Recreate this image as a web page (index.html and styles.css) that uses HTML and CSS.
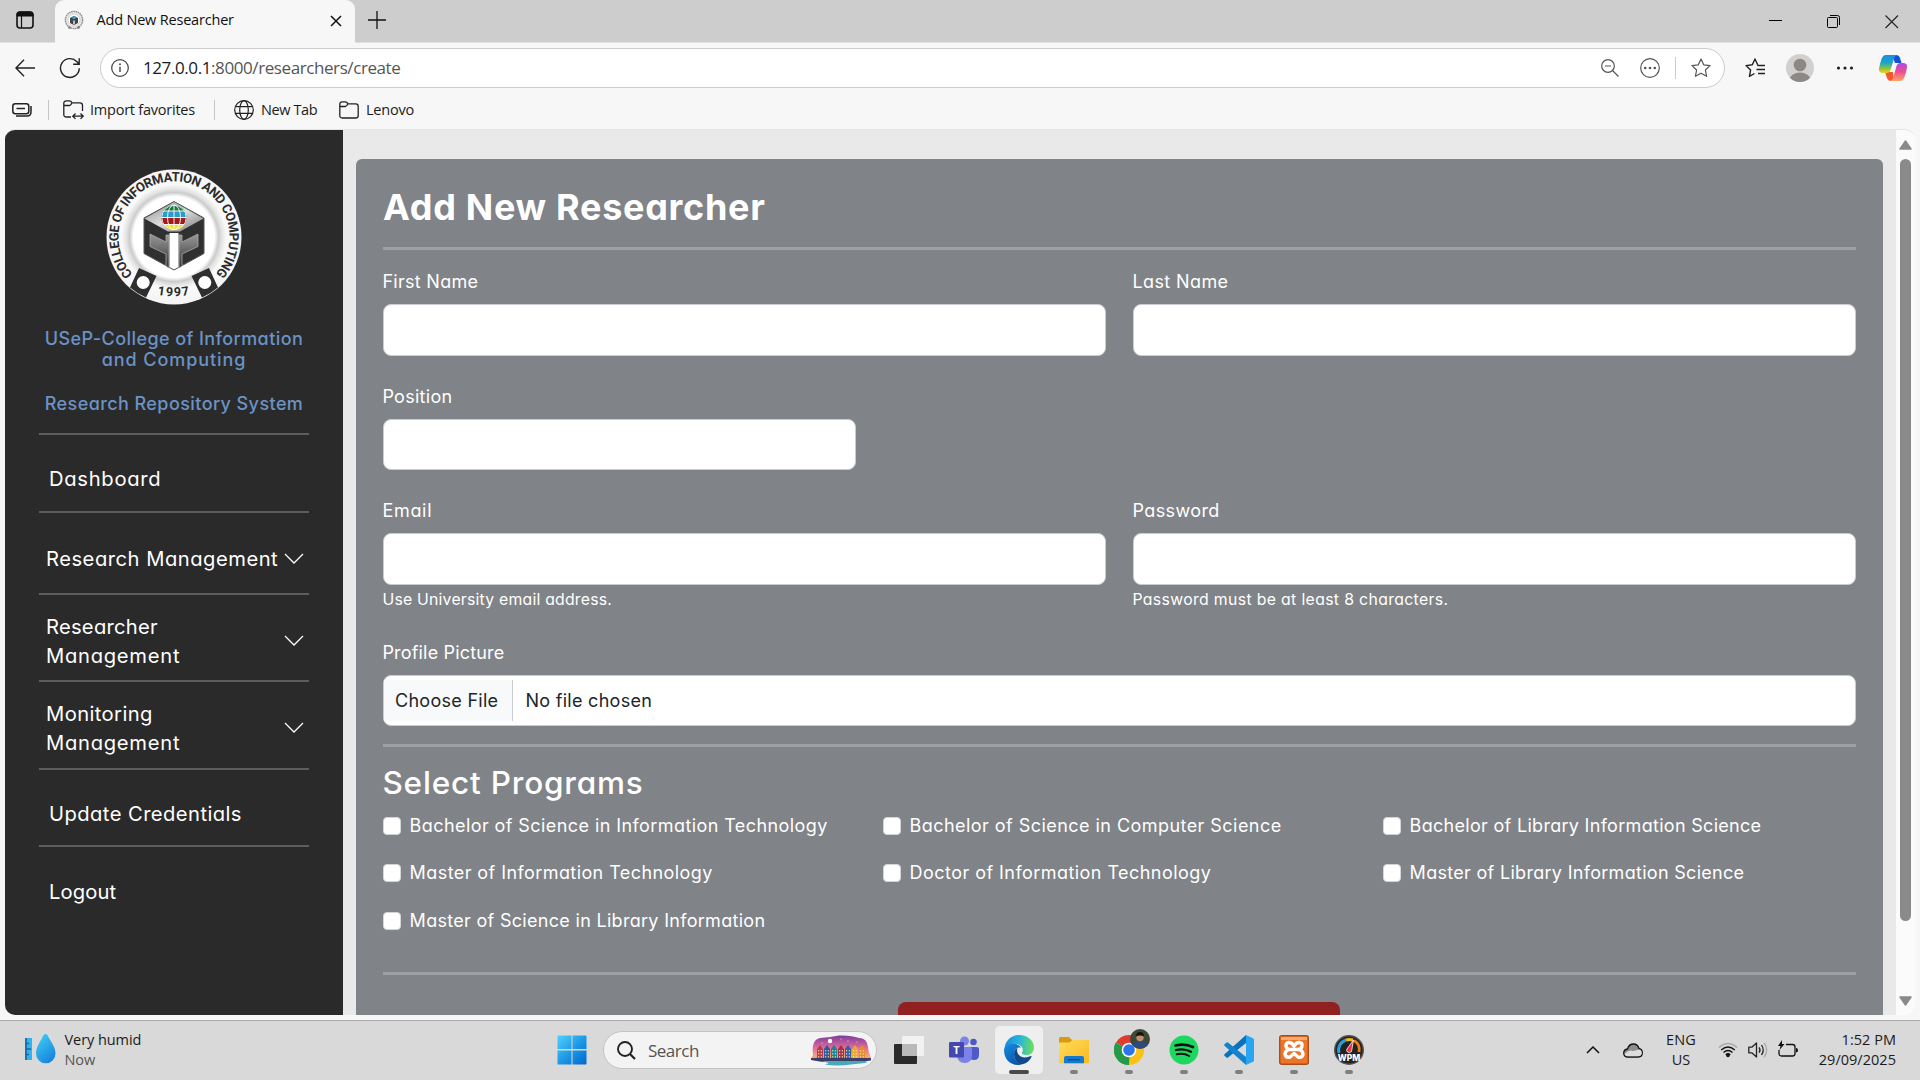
FILE: index.html
```
<!DOCTYPE html>
<html lang="en">
<head>
<meta charset="utf-8">
<title>Add New Researcher</title>
<link rel="stylesheet" href="styles.css">
</head>
<body>
<div class="desktop">

<header class="tabstrip">
  <svg class="tab-actions" width="18" height="18" viewBox="0 0 18 18"><rect x="1" y="1" width="16" height="16" rx="3" fill="none" stroke="#111" stroke-width="1.6"/><path d="M1 5V3.5Q1 1 3.5 1h11Q17 1 17 3.5V5z" fill="#111" stroke="#111"/><path d="M5.5 5v12" stroke="#111" stroke-width="1.2"/></svg>
  <div class="tab">
    <svg class="favicon" width="20" height="20" viewBox="0 0 20 20"><circle cx="10" cy="10" r="8.6" fill="#e9e9e9" stroke="#8c8c8c" stroke-width="1.4" stroke-dasharray="1.6 .6"/><circle cx="10" cy="10" r="6" fill="#fff" stroke="#bbb" stroke-width=".6"/><path d="M6 8l4-2 4 2v5l-4 2.200-4-2.200z" fill="#444"/><circle cx="10" cy="7.500" r="1.800" fill="#3aa0c8"/><path d="M9.300 10.500h1.400v4h-1.400z" fill="#eee"/><circle cx="5.500" cy="17.500" r="1.300" fill="#777"/><circle cx="14.500" cy="17.500" r="1.300" fill="#777"/></svg>
    <span class="tab-title">Add New Researcher</span>
    <svg class="tab-close" width="12" height="12" viewBox="0 0 12 12"><path d="M1 1l10 10M11 1L1 11" stroke="#111" stroke-width="1.5"/></svg>
  </div>
  <svg class="tab-new" width="18" height="18" viewBox="0 0 18 18"><path d="M9 0v18M0 9h18" stroke="#111" stroke-width="1.3"/></svg>
  <div class="window-buttons">
    <svg width="14" height="14" viewBox="0 0 14 14"><path d="M0 5.500h13" stroke="#000"/></svg>
    <svg width="14" height="14" viewBox="0 0 14 14"><rect x=".5" y="2.500" width="10" height="10" rx="1" fill="none" stroke="#000"/><path d="M3 .5h7.500q2 0 2 2V10" fill="none" stroke="#000"/></svg>
    <svg width="14" height="14" viewBox="0 0 14 14"><path d="M.5.5l12.500 12.500M13 .5L.5 13" stroke="#222" stroke-width="1.1"/></svg>
  </div>
</header>

<div class="toolbar">
  <svg class="nav-back" width="20" height="18" viewBox="0 0 20 18"><path d="M9 .8L1 9l8 8.200M1 9h19" fill="none" stroke="#222" stroke-width="1.4"/></svg>
  <svg class="nav-refresh" width="22" height="22" viewBox="0 0 22 22"><path d="M20.300 11.200a9.400 9.400 0 1 1-2.600-6.700L20 7M20.200 1.200v6h-6" fill="none" stroke="#222" stroke-width="1.4"/></svg>
  <div class="address">
    <svg width="18" height="18" viewBox="0 0 18 18"><circle cx="9" cy="9" r="8.300" fill="none" stroke="#444" stroke-width="1.200"/><path d="M9 7.800v5.200" stroke="#444" stroke-width="1.400"/><circle cx="9" cy="5.300" r=".95" fill="#444"/></svg>
    <span class="url"><b>127.0.0.1</b>:8000/researchers/create</span>
    <svg class="addr-zoom" width="18" height="18" viewBox="0 0 18 18"><circle cx="7" cy="7" r="6.300" fill="none" stroke="#555" stroke-width="1.200"/><path d="M4 7h6M11.500 11.500l6 6" stroke="#555" stroke-width="1.200"/></svg>
    <svg class="addr-more" width="20" height="20" viewBox="0 0 20 20"><circle cx="10" cy="10" r="9.300" fill="none" stroke="#555" stroke-width="1.200"/><g fill="#555"><circle cx="5.200" cy="10" r="1.300"/><circle cx="10" cy="10" r="1.300"/><circle cx="14.800" cy="10" r="1.300"/></g></svg>
    <i class="addr-sep"></i>
    <svg class="addr-star" width="20" height="20" viewBox="0 0 20 20"><path d="M10 1l2.700 5.800 6.300.8-4.600 4.400 1.200 6.300L10 15.200l-5.600 3.100 1.200-6.300L1 7.600l6.300-.8z" fill="none" stroke="#555" stroke-width="1.200" stroke-linejoin="round"/></svg>
  </div>
  <svg class="fav-list" width="20" height="20" viewBox="0 0 20 20"><path d="M13 7.500L12.500 6.500 10 1 7.300 6.800 1 7.600 5.600 12l-1.200 6.300L9.500 15.500M12.500 7.500H20M11.500 11.500H20M13 15.500H20" fill="none" stroke="#222" stroke-width="1.400" stroke-linejoin="round"/></svg>
  <svg class="avatar" width="28" height="28" viewBox="0 0 28 28"><defs><clipPath id="av"><circle cx="14" cy="14" r="14"/></clipPath></defs><g clip-path="url(#av)"><rect width="28" height="28" fill="#d2d0ce"/><circle cx="14" cy="11" r="6.300" fill="#8b8885"/><ellipse cx="14" cy="25" rx="10" ry="6.500" fill="#8b8885"/></g></svg>
  <svg class="menu-dots" width="18" height="4" viewBox="0 0 18 4"><g fill="#222"><circle cx="2.500" cy="2" r="1.600"/><circle cx="9" cy="2" r="1.600"/><circle cx="15.500" cy="2" r="1.600"/></g></svg>
  <svg class="copilot" width="28" height="26" viewBox="0 0 28 26"><defs><linearGradient id="c1" x1="0" y1="0" x2="0" y2="1"><stop offset="0" stop-color="#1b8be8"/><stop offset=".45" stop-color="#1ea6c4"/><stop offset=".75" stop-color="#8fc43c"/><stop offset="1" stop-color="#f3d11c"/></linearGradient><linearGradient id="c2" x1="0" y1="0" x2="0" y2="1"><stop offset="0" stop-color="#b04be8"/><stop offset=".5" stop-color="#ee4f8c"/><stop offset="1" stop-color="#ffa665"/></linearGradient></defs><path d="M13 0h4q3 0 4 3l1.500 5H16z" fill="#1750d4"/><path d="M6 17h8l1 9h-3q-3 0-4-3z" fill="#f4582c"/><path d="M7 0h11q-2 .5-2.800 3L11.500 15q-1 3-4 3H4q-4.500 0-4-4.500Q.5 10 2.500 4 4 0 7 0z" fill="url(#c1)"/><path d="M21 26H11q2.500-.8 3.200-3l3.300-12q1-3 4-3H24q4.500 0 4 4.500-.5 3.500-2.500 9.500-1.500 4-4.500 4z" fill="url(#c2)"/></svg>
</div>

<nav class="favorites">
  <svg class="fav-pin" width="20" height="14" viewBox="0 0 20 14"><rect x=".8" y=".8" width="16" height="10" rx="2.500" fill="none" stroke="#222" stroke-width="1.500"/><path d="M4.500 5.500h8.500" stroke="#222" stroke-width="1.500"/><path d="M19 3v6q0 4-4 4H4" fill="none" stroke="#222" stroke-width="1.500"/></svg>
  <i class="fav-sep"></i>
  <svg class="fav-import" width="21" height="20" viewBox="0 0 21 20"><path d="M8 17H3.500Q.8 17 .8 14.500V3.300Q.8.8 3.500.8h3q1.500 0 2.500 2h8q2.500 0 2.500 2.500V11M.8 5.500h6q1 0 2-2.500M10.500 16.200h9M12.500 13.500l-2.700 2.700 2.700 2.700M17.500 13.500l2.700 2.700-2.700 2.700" fill="none" stroke="#222" stroke-width="1.300"/></svg>
  <span class="t-import">Import favorites</span>
  <i class="fav-sep sep2"></i>
  <svg class="fav-globe" width="20" height="20" viewBox="0 0 20 20"><g fill="none" stroke="#222" stroke-width="1.200"><circle cx="10" cy="10" r="9.300"/><ellipse cx="10" cy="10" rx="4.300" ry="9.300"/><path d="M1.500 6.700h17M1.500 13.300h17"/></g></svg>
  <span class="t-newtab">New Tab</span>
  <svg class="fav-folder" width="20" height="18" viewBox="0 0 20 18"><path d="M3.300.8h3q1.500 0 2.700 2h7.700q2.500 0 2.500 2.500v9.200q0 2.500-2.500 2.500H3.300q-2.500 0-2.500-2.500V3.300q0-2.500 2.500-2.500zM.8 5.500h5.500q1.300 0 2.700-2.700" fill="none" stroke="#222" stroke-width="1.300"/></svg>
  <span class="t-lenovo">Lenovo</span>
</nav>

<div class="viewport">
  <aside class="sidebar">
    <svg class="seal" width="136" height="136" viewBox="0 0 136 136">
      <defs>
        <path id="arc" d="M26.800 105.100A55.500 55.500 0 1 1 109.200 105.100"/>
        <path id="yr" d="M44 124Q68 130.500 92 124"/>
        <radialGradient id="ring"><stop offset=".6" stop-color="#fff"/><stop offset=".66" stop-color="#ccc"/><stop offset=".71" stop-color="#e4e4e4"/><stop offset=".78" stop-color="#fafafa"/><stop offset="1" stop-color="#f4f4f4"/></radialGradient>
        <linearGradient id="top" x1="0" y1="0" x2="1" y2="1"><stop offset="0" stop-color="#888"/><stop offset=".5" stop-color="#ddd"/><stop offset="1" stop-color="#777"/></linearGradient>
        <linearGradient id="bar" x1="0" y1="0" x2="0" y2="1"><stop offset="0" stop-color="#999"/><stop offset="1" stop-color="#333"/></linearGradient>
        <clipPath id="gl"><circle cx="68" cy="48.500" r="12.500"/></clipPath>
      </defs>
      <circle cx="68" cy="68" r="67.500" fill="url(#ring)"/>
      <path d="M33 99l17.500 8-10.500 21.500q-9-4-16-10z" fill="#2e2e2e"/>
      <path d="M103 99l-17.500 8L96 128.500q9-4 16-10z" fill="#2e2e2e"/>
      <circle cx="37.200" cy="113.500" r="6.500" fill="#fff"/><circle cx="98.800" cy="113.500" r="6.500" fill="#fff"/>
      <path d="M68 32.500l30 16.500v35.500L68 101 38 84.500V49z" fill="#303030" stroke="#555" stroke-width="1"/>
      <path d="M68 33l29.500 16.500L74 62.500h-12L38.500 49.500z" fill="url(#top)"/>
      <path d="M63 66v33L60 97V85L44 77.500V65l16 8V66z" fill="url(#bar)" stroke="#aaa" stroke-width=".8"/>
      <path d="M73 66v33l3-2V85l16-7.500V65l-16 8V66z" fill="url(#bar)" stroke="#aaa" stroke-width=".8"/>
      <path d="M63.500 64h9v34L68 100.500 63.500 98z" fill="#fff"/>
      <g clip-path="url(#gl)"><rect x="55" y="35" width="26" height="7" fill="#1d7a45"/><rect x="55" y="42" width="26" height="6.500" fill="#2a9ccb"/><rect x="55" y="48.500" width="26" height="7" fill="#a01c1c"/><rect x="55" y="55.500" width="26" height="7" fill="#f4e02c"/><g fill="none" stroke="#fff" stroke-width=".9"><path d="M68 36v25M55 42h26M55 48.500h26M55 55.500h26"/><ellipse cx="68" cy="48.500" rx="6.500" ry="12.500"/><circle cx="68" cy="48.500" r="12.300"/></g></g>
      <text class="seal-text"><textPath href="#arc" textLength="255" lengthAdjust="spacing">COLLEGE OF INFORMATION AND COMPUTING</textPath></text>
      <text class="seal-year"><textPath href="#yr" startOffset="50%" text-anchor="middle">1997</textPath></text>
    </svg>
    <div class="brand"><span class="brand-a">USeP-College of Information</span><span class="brand-b">and Computing</span></div>
    <div class="brand brand-sys"><span class="brand-a">Research Repository System</span></div>
    <ul class="menu">
      <li class="item link dash"><span>Dashboard</span></li>
      <li class="item group rm"><span>Research Management</span><svg class="chev" width="20" height="12" viewBox="0 0 20 12"><path d="M1 1l9 9 9-9" fill="none" stroke="#fff" stroke-width="1.300"/></svg></li>
      <li class="item group rr"><span>Researcher<br><em>Management</em></span><svg class="chev" width="20" height="12" viewBox="0 0 20 12"><path d="M1 1l9 9 9-9" fill="none" stroke="#fff" stroke-width="1.300"/></svg></li>
      <li class="item group mm"><span>Monitoring<br><em>Management</em></span><svg class="chev" width="20" height="12" viewBox="0 0 20 12"><path d="M1 1l9 9 9-9" fill="none" stroke="#fff" stroke-width="1.300"/></svg></li>
      <li class="item link uc"><span>Update Credentials</span></li>
      <li class="item link lo"><span>Logout</span></li>
    </ul>
  </aside>

  <main class="card">
    <h1>Add New Researcher</h1>
    <div class="rule"></div>
    <div class="cols">
      <div><label class="l1">First Name</label><div class="input"></div></div>
      <div><label class="l1 wide">Last Name</label><div class="input"></div></div>
    </div>
    <div class="position"><label class="l2">Position</label><div class="input short"></div></div>
    <div class="cols">
      <div><label class="l3 wider">Email</label><div class="input"></div><p class="hint">Use University email address.</p></div>
      <div><label class="l3 wide">Password</label><div class="input"></div><p class="hint hint-b">Password must be at least 8 characters.</p></div>
    </div>
    <label class="l4">Profile Picture</label>
    <div class="input file"><span class="choose">Choose File</span><span class="nofile">No file chosen</span></div>
    <div class="rule rule-file"></div>
    <h2>Select Programs</h2>
    <div class="programs">
      <div class="check"><i></i><span class="p42">Bachelor of Science in Information Technology</span></div>
      <div class="check"><i></i><span class="p47">Bachelor of Science in Computer Science</span></div>
      <div class="check"><i></i><span class="p32">Bachelor of Library Information Science</span></div>
      <div class="check"><i></i><span class="p42">Master of Information Technology</span></div>
      <div class="check"><i></i><span class="p47">Doctor of Information Technology</span></div>
      <div class="check"><i></i><span class="p32">Master of Library Information Science</span></div>
      <div class="check"><i></i><span class="p32">Master of Science in Library Information</span></div>
    </div>
    <div class="rule"></div>
    <div class="submit"></div>
  </main>

  <div class="scrollbar">
    <svg width="13" height="10" viewBox="0 0 13 10"><path d="M6.500 1L12 9H1z" fill="#8a8a8a" stroke="#8a8a8a" stroke-width="1.500" stroke-linejoin="round"/></svg>
    <div class="thumb"></div>
    <svg width="13" height="10" viewBox="0 0 13 10"><path d="M6.500 9L12 1H1z" fill="#8a8a8a" stroke="#8a8a8a" stroke-width="1.500" stroke-linejoin="round"/></svg>
  </div>
</div>

<footer class="taskbar">
  <svg class="weather" width="32" height="32" viewBox="0 0 32 32"><defs><linearGradient id="dr" x1="0" y1="0" x2=".6" y2="1"><stop offset="0" stop-color="#43d3f5"/><stop offset="1" stop-color="#1886dd"/></linearGradient></defs><rect x="0" y="5" width="7" height="22" fill="#2fb4ee"/><path d="M1 5v22M1 10.500h3M1 16h5M1 21.500h3" stroke="#1565a8" stroke-width="1.600"/><path d="M20.500 1c1.500 0 2 1 3 3 2.500 5 7 10 7 16.500a9.700 9.700 0 0 1-19.500 0C11 14 15 9 17.500 4c1-2 1.500-3 3-3z" fill="url(#dr)"/></svg>
  <div class="weather-text"><span>Very humid</span><span class="dim">Now</span></div>

  <svg class="start" width="30" height="30" viewBox="0 0 30 30"><defs><linearGradient id="w" x1="0" y1="0" x2="1" y2="1"><stop offset="0" stop-color="#4fd2ff"/><stop offset=".5" stop-color="#1f9ae6"/><stop offset="1" stop-color="#0067cf"/></linearGradient></defs><path d="M1 .5h13.500V14H.5V1zM15.500.5H28.500L29.500 1v13h-14zM.5 15.500h14v14H1l-.5-.5zM15.500 15.500h14V29l-.5.500H15.500z" fill="url(#w)"/></svg>
  <div class="search">
    <svg width="19" height="19" viewBox="0 0 19 19"><circle cx="8" cy="8" r="7" fill="none" stroke="#222" stroke-width="1.900"/><path d="M13 13l5 5" stroke="#222" stroke-width="2.200"/></svg>
    <span>Search</span>
    <svg class="canal" width="60" height="31" viewBox="0 0 60 31"><defs><linearGradient id="sky" x1="0" y1="0" x2="0" y2="1"><stop offset="0" stop-color="#7d3c9c"/><stop offset=".45" stop-color="#d9699c"/><stop offset=".8" stop-color="#f5a07c"/></linearGradient></defs><path d="M2 20Q0 5 9 3 20 2 28 .5 40 0 48 3q8 0 9 9 0 5 3 11-3 3-10 2l-38 1Q4 27 0 24z" fill="url(#sky)"/><circle cx="19" cy="6" r="2.200" fill="#fff"/><g fill="#fff"><circle cx="30" cy="4" r=".5"/><circle cx="37" cy="6" r=".6"/><circle cx="46" cy="7" r=".5"/><circle cx="11" cy="8" r=".5"/></g><g><path d="M6 25V14l3-4 3 4v11z" fill="#b43a4c"/><path d="M13 25V14l3-4 3 4v11z" fill="#285a9c"/><path d="M20 25V14l3-4 3 4v11z" fill="#1c8393"/><path d="M27 25V14l3-4 3 4v11z" fill="#a33146"/><path d="M34 25V14l3-4 3 4v11z" fill="#315ca6"/><path d="M41 25V14l3-4 3 4v11z" fill="#f0a62d"/><path d="M48 25V14l3-4 3 4v11z" fill="#e58d28"/></g><path d="M7.700 15v8M10.300 15v8M14.700 15v8M17.300 15v8M21.700 15v8M24.300 15v8M28.700 15v8M31.300 15v8M35.700 15v8M38.300 15v8M42.700 15v8M45.300 15v8M49.700 15v8M52.300 15v8" stroke="#ffe6b0" stroke-width=".9" stroke-dasharray="1.500 1.500"/><path d="M0 23h60v2.500L44 27.500 12 27 0 25z" fill="#3a3e6b"/><path d="M10 26h44q4 1 0 2l-14 1.500q-14 2-26 0l4-1.500z" fill="#4aa8b8"/></svg>
  </div>
  <div class="apps">
    <div class="app"><svg width="30" height="30" viewBox="0 0 30 30"><rect x="0" y="9" width="23" height="20" rx="1" fill="#2a2a2a"/><rect x="8" y="1" width="22" height="20" rx="1" fill="#f6f6f6" opacity=".85"/><rect x="8" y="9" width="15" height="12" fill="#b9b9b9"/></svg></div>
    <div class="app"><svg width="30" height="30" viewBox="0 0 30 30"><circle cx="15.500" cy="6" r="4.500" fill="#7b83eb"/><circle cx="24.500" cy="7" r="3.300" fill="#5059c9"/><path d="M19 12h9q2 0 2 2v6q0 5-5 5-4 0-6-3z" fill="#5059c9"/><path d="M9 12h12q2 0 2 2v6q0 8-7.500 8-6.500 0-7.500-7z" fill="#7b83eb"/><rect x="0" y="7" width="15" height="15.500" rx="1.300" fill="#4349b0"/><text x="7.500" y="18.800" class="teams-t">T</text></svg></div>
    <div class="app active"><svg width="30" height="30" viewBox="0 0 30 30"><defs><linearGradient id="e1" x1="0" y1=".3" x2="1" y2=".4"><stop offset="0" stop-color="#2188d8"/><stop offset=".5" stop-color="#26b5dc"/><stop offset="1" stop-color="#6be05a"/></linearGradient><linearGradient id="e2" x1="0" y1="0" x2=".5" y2="1"><stop offset="0" stop-color="#138fe0"/><stop offset="1" stop-color="#0c59b0"/></linearGradient></defs><path d="M.5 13C1.500 5 8 0 15 0c9 0 15 6 15 12.500 0 5-3.500 7.500-7.500 7.500-4 0-5-1.500-4.500-2.500 1.500-1.500 1.500-6-3.500-8C9 7.500 2 9.500.5 13z" fill="url(#e1)"/><path d="M0 15C.5 10 5 8 9.500 8.500c4 .4 6.500 2 7.500 4.500-3-1.500-7 1-7 6 0 6 4 9 7 10.500-1 .5-2 .5-3 .5C5.500 30 0 23.500 0 15z" fill="url(#e2)"/><path d="M10 19c0-3.500 1.800-5.500 3.500-6-1.800 4.500 2 9.500 7 9.500 3.500 0 5.500-1.500 6.500-1.500.8 0 .8.800.2 1.600C25 26.500 21 29.500 17 29.500 13.500 28.500 10 24.500 10 19z" fill="#114a8b"/></svg><b class="long"></b></div>
    <div class="app"><svg width="30" height="30" viewBox="0 0 30 30"><defs><linearGradient id="f" x1="0" y1="0" x2="1" y2="1"><stop offset="0" stop-color="#ffdc5c"/><stop offset="1" stop-color="#fbb91f"/></linearGradient></defs><path d="M0 3.500Q0 2 1.500 2H10l3 3h16q1 0 1 1v5H0z" fill="#d99a0b"/><path d="M0 7.500h10.500L13.500 5H29q1 0 1 1v21q0 1.300-1.300 1.300H1.300Q0 28.300 0 27z" fill="url(#f)"/><path d="M5 28.300V23q0-2 2-2h16q2 0 2 2v5.300z" fill="#1579cd"/><path d="M9 24.700h12" stroke="#0a4d94" stroke-width="1.300"/></svg><b></b></div>
    <div class="app"><svg class="chrome" width="36" height="36" viewBox="0 0 36 36"><path d="M15 21L2.010 13.500A15 15 0 0 1 28 13.500z" fill="#e03b2e"/><path d="M15 21L28 13.500A15 15 0 0 1 15 36z" fill="#fbc116"/><path d="M15 21V36A15 15 0 0 1 2 13.500z" fill="#279a49"/><path d="M15 14h13l-6 11L15 36z" fill="#fbc116"/><path d="M2 13.500l6.500 11 7 3.500L15 36A15 15 0 0 1 2 13.500z" fill="#279a49"/><circle cx="15" cy="21" r="7.300" fill="#fff"/><circle cx="15" cy="21" r="5.800" fill="#2c75e8"/><circle cx="26" cy="10" r="10" fill="#3b4a37"/><path d="M18 15.500q3-3 5-3h6q3 0 5 3a10 10 0 0 1-16 0z" fill="#2e4a7d"/><circle cx="26" cy="8.500" r="3.700" fill="#c08f70"/><path d="M22 7.500q0-4.500 4-4.500t4 4.500q-4-2-8 0z" fill="#17140f"/></svg><b></b></div>
    <div class="app"><svg width="30" height="30" viewBox="0 0 30 30"><circle cx="15" cy="15" r="14.500" fill="#1ed760"/><g fill="none" stroke="#111" stroke-linecap="round"><path d="M6.500 10.500q9-2.500 17.500 1.500" stroke-width="2.700"/><path d="M7 15q8-2 15 1.700" stroke-width="2.300"/><path d="M7.700 19.300q7-1.500 12.500 1.700" stroke-width="1.900"/></g></svg><b></b></div>
    <div class="app"><svg width="30" height="30" viewBox="0 0 30 30"><path d="M22 0v8L4 22.500q-.8.600-1.500 0l-2-1.700q-.8-.8 0-1.600z" fill="#0a72bd"/><path d="M22 30v-8L4 7.500Q3.200 7 2.500 7.500l-2 1.700q-.8.800 0 1.600z" fill="#1383d0"/><path d="M22 0l7 3.200q1 .5 1 1.500v20.600q0 1-1 1.500L22 30z" fill="#2aa5f2"/></svg><b></b></div>
    <div class="app"><svg width="30" height="30" viewBox="0 0 30 30"><rect x=".7" y=".7" width="28.600" height="28.600" rx="2" fill="#ec7527" stroke="#a9501a" stroke-width="1.400"/><rect x="2" y="2" width="26" height="3" fill="#f6a86e"/><g fill="none" stroke="#fff" stroke-width="3.400" stroke-linecap="round" stroke-linejoin="round"><path d="M9.500 7.500q-3 .5-2.500 3.500.5 3 3.500 3.500h9q3-.5 3.500-3.500.5-3-2.500-3.500-3-.5-5.500 3.500-2.500-4-5.500-3.500z"/><path d="M9.500 14.500q-3.500 1.500-3.500 5 1 3.500 5 2.500l4-3.500 4 3.500q4 1 5-2.500 0-3.500-3.500-5"/></g></svg><b></b></div>
    <div class="app"><svg width="30" height="30" viewBox="0 0 30 30"><circle cx="15" cy="15" r="14.300" fill="#222" stroke="#555" stroke-width="1.400"/><path d="M5 18A10.500 10.500 0 0 1 12 5" fill="none" stroke="#2a9ddb" stroke-width="3"/><path d="M12 5a10.500 10.500 0 0 1 7 0" fill="none" stroke="#f3b81a" stroke-width="3"/><path d="M20 5.500A10.500 10.500 0 0 1 25 17" fill="none" stroke="#f07b1b" stroke-width="3"/><path d="M19.500 5l-2 11.500q-2 2-4 .5-1.500-1.500-.5-3z" fill="#f0303c" stroke="#fff" stroke-width=".8"/><text x="15" y="26" class="wpm-t">WPM</text></svg><b></b></div>
  </div>
  <div class="tray">
    <svg class="t-up" width="14" height="8" viewBox="0 0 14 8"><path d="M1 7l6-6 6 6" fill="none" stroke="#111" stroke-width="1.500"/></svg>
    <svg class="t-cloud" width="20" height="15" viewBox="0 0 20 15"><path d="M5 14q-4.300 0-4.300-4 0-3.300 3.800-4Q6 1 10.500 1q4 0 5.500 4.500 3.300.8 3.300 4.300 0 4.200-4 4.200z" fill="#8d8d8d" stroke="#111" stroke-width="1.300"/><path d="M1.500 11Q6 6 10 8l7-1.500q2 1 1.800 4-.8 2.800-3.500 2.800H5q-3 0-3.500-2.300z" fill="#dedede"/></svg>
    <div class="lang"><span>ENG</span><span>US</span></div>
    <svg class="t-wifi" width="20" height="16" viewBox="0 0 20 16"><g fill="none" stroke="#111" stroke-width="1.300"><path d="M1 5.500q9-8 18 0" stroke="#aaa"/><path d="M3.200 8q6.800-6 13.600 0M5.500 10.500q4.500-4 9 0M7.700 12.800q2.300-2 4.600 0"/></g><circle cx="10" cy="13.500" r="1.800" fill="#111"/></svg>
    <svg class="t-vol" width="20" height="18" viewBox="0 0 20 18"><g fill="none" stroke="#222" stroke-width="1.300"><path d="M.8 6.200h3L8.500 2v14l-4.700-4.200h-3zM11 6.300q2 2.700 0 5.400M13.500 4q3.500 5 0 10" stroke-linejoin="round"/><path d="M16.200 1.800q5 7.200 0 14.400" stroke="#aaa"/></g></svg>
    <svg class="t-bat" width="20" height="17" viewBox="0 0 20 17"><path d="M8 4.500h6.500q2.500 0 2.500 2.500v6.500q0 2.500-2.500 2.500h-11Q1 16 1 13.500V10" fill="none" stroke="#111" stroke-width="1.300"/><path d="M18 8q2 0 2 2.200T18 12.500z" fill="#111"/><path d="M4 0L0 6h2.500L1.500 10l5-6H4z" fill="#111"/></svg>
    <div class="clock"><span>1:52 PM</span><span>29/09/2025</span></div>
  </div>
</footer>
</div>
</body>
</html>
```
FILE: styles.css
```
* { box-sizing: border-box; }
body { margin: 0; overflow: hidden; }
svg { display: block; flex: none; }
h1, h2, p, ul { margin: 0; padding: 0; }
i, em, b { font-style: normal; font-weight: inherit; }

.desktop {
  width: 1920px;
  height: 1080px;
  display: flex;
  flex-direction: column;
  background: #f7f7f7;
  font: 14.5px/20px "Open Sans", sans-serif;
  letter-spacing: -0.23px;
  color: #1c1c1c;
  white-space: nowrap;
}

/* Tab strip */
.tabstrip {
  height: 43px;
  flex: none;
  display: flex;
  background: #cdcdcd;
  border-bottom: 1px solid #e0e0e0;
}
.tab-actions { margin: 11px 0 0 16px; }
.tab {
  width: 300px;
  height: 43px;
  margin-left: 21px;
  display: flex;
  align-items: center;
  padding: 0 13px 3px 9px;
  background: #f7f7f7;
  border-radius: 9px 9px 0 0;
}
.tab-title { margin-left: 12.5px; flex: 1; color: #111; letter-spacing: -0.19px; }
.tab-close { margin-top: 2px; }
.tab-new { margin: 11px 0 0 13px; }
.window-buttons { display: flex; gap: 44px; margin: 15px 21px 0 auto; }

/* Address row */
.toolbar { height: 50px; flex: none; display: flex; align-items: center; padding-left: 15px; }
.nav-refresh { margin-left: 24px; }
.address {
  width: 1625px;
  height: 40px;
  margin-left: 19px;
  padding: 0 13px 0 10px;
  display: flex;
  align-items: center;
  background: #fff;
  border: 1px solid #ccc;
  border-radius: 20px;
}
.url { margin-left: 14px; flex: 1; font-size: 17px; letter-spacing: -0.41px; color: #555; }
.url b { color: #1a1a1a; }
.addr-more { margin-left: 21px; }
.addr-sep { width: 1px; height: 22px; background: #ccc; margin-left: 15px; }
.addr-star { margin-left: 15px; }
.fav-list { margin-left: 20px; }
.avatar { margin-left: 21px; }
.menu-dots { margin-left: 22px; }
.copilot { margin-left: 25px; }

/* Favourites row */
.favorites { height: 36px; flex: none; display: flex; align-items: center; padding: 0 0 2px 12px; }
.fav-sep { width: 1px; height: 20px; margin-left: 16px; background: #c6c6c6; }
.fav-import { margin-left: 14px; }
.t-import { margin-left: 6px; width: 105px; }
.sep2 { margin-left: 19px; }
.fav-globe { margin-left: 19px; }
.t-newtab { margin-left: 7px; width: 57px; letter-spacing: -0.4px; }
.fav-folder { margin-left: 21px; }
.t-lenovo { margin-left: 7px; }

/* Page viewport */
.viewport {
  height: 886px;
  flex: none;
  margin: 0 5px;
  display: flex;
  align-items: flex-start;
  overflow: hidden;
  background: #e9e9e9;
  border-radius: 10px;
  border-top: 1px solid #e4e4e4;
  font: 18px/24px Inter, sans-serif;
  font-feature-settings: "cv11";
}
.sidebar {
  width: 338px;
  height: 885px;
  flex: none;
  padding: 39px 34px 0;
  background: #2a2a2a;
  color: #fff;
}
.seal { margin-left: 66.5px; }
.seal-text { font: 700 13px Roboto, sans-serif; fill: #2b2b2b; letter-spacing: 0; }
.seal-year { font: 700 12.5px Roboto, sans-serif; fill: #2b2b2b; letter-spacing: 1.2px; }
.brand {
  margin: 23px -10px 0;
  display: flex;
  flex-direction: column;
  align-items: center;
  font-size: 18px;
  font-weight: 500;
  line-height: 21px;
  color: #6b93c4;
}
.brand-a { letter-spacing: 0.42px; }
.brand-b { letter-spacing: 0.92px; }
.brand-sys { margin-top: 23px; height: 40px; }
.menu { list-style: none; border-top: 2px solid #5d5d5d; font-size: 20.2px; line-height: 29.5px; letter-spacing: 0.5px; }
.item { display: flex; align-items: center; justify-content: space-between; border-bottom: 2px solid #5d5d5d; }
.item em { letter-spacing: 0.72px; }
.link { padding-left: 10px; }
.group { padding-left: 7px; padding-right: 5px; }
.dash { height: 78px; padding-top: 11px; letter-spacing: 0.7px; }
.rm { height: 82px; padding-top: 12px; }
.rr { height: 87px; padding-top: 7px; letter-spacing: 0.25px; }
.mm { height: 88px; padding-top: 6px; letter-spacing: 0.4px; }
.uc { height: 77px; padding-top: 13px; letter-spacing: 0.43px; }
.lo { height: 77px; padding-top: 13px; border: 0; letter-spacing: 0.1px; }

/* Form card */
.card {
  width: 1527px;
  height: 856px;
  flex: none;
  margin: 29px 0 0 13px;
  padding: 0 27px;
  background: #808387;
  border-radius: 6px 6px 0 0;
  color: #fff;
  letter-spacing: 0.28px;
}
h1 { height: 88px; padding-top: 9px; font-size: 36px; line-height: 78px; font-weight: 700; letter-spacing: 0.7px; }
.rule { height: 3px; background: #9da1a4; }
.cols { display: grid; grid-template-columns: 1fr 1fr; column-gap: 27px; }
label { display: flex; align-items: center; margin-left: -0.6px; }
.l1 { height: 54px; padding-top: 10px; }
.l2 { height: 63px; padding-top: 19px; }
.l3 { height: 63px; padding-top: 18px; }
.l4 { height: 60px; padding-top: 15px; letter-spacing: 0.18px; }
.wide { letter-spacing: 0.4px; }
.wider { letter-spacing: 0.7px; }
.input { height: 52px; background: #fff; border: 1px solid #c9ccd0; border-radius: 8px; }
.short { width: 473px; height: 51px; }
.hint { height: 30px; margin-left: -0.6px; font-size: 15.8px; line-height: 30px; letter-spacing: 0.22px; }
.hint-b { letter-spacing: 0.35px; }
.file { height: 51px; display: flex; align-items: center; color: #212529; letter-spacing: 0.28px; }
.choose { width: 129px; height: 41px; padding-left: 11px; line-height: 41px; background: #f8f9fa; border-right: 1px solid #c9ccd0; }
.nofile { margin-left: 12.5px; }
.rule-file { margin-top: 18px; }
h2 { height: 54.5px; padding-top: 18px; margin-left: -0.6px; font-size: 31.5px; line-height: 36px; font-weight: 500; letter-spacing: 0.82px; }
.programs { display: grid; grid-template-columns: repeat(3, 500px); grid-auto-rows: 47.5px; height: 170.5px; }
.check { display: flex; align-items: center; padding-top: 0.5px; }
.check i { width: 18px; height: 18px; margin-right: 8.6px; background: #fff; border: 1px solid #d3d5d8; border-radius: 4px; }
.p32 { letter-spacing: 0.3px; }
.p42 { letter-spacing: 0.42px; }
.p47 { letter-spacing: 0.45px; }
.submit { width: 442px; height: 13px; margin: 27px 0 0 515px; background: #912120; border-radius: 8px 8px 0 0; }

.scrollbar {
  width: 19px;
  height: 885px;
  margin-left: auto;
  padding: 10px 0 9px;
  display: flex;
  flex-direction: column;
  align-items: center;
  background: #fbfbfb;
}
.thumb { width: 11px; height: 762px; margin: 9px 0 auto; background: #8a8a8a; border-radius: 6px; }

/* Taskbar */
.taskbar {
  height: 60px;
  flex: none;
  margin-top: 5px;
  padding: 0 24px 1px 25px;
  display: flex;
  align-items: center;
  background: #d9d9d9;
  border-top: 1px solid #a9a9a9;
  letter-spacing: -0.07px;
}
.weather { margin-top: -2px; }
.weather-text, .lang, .clock { display: flex; flex-direction: column; }
.weather-text { width: 100px; margin-left: 7.5px; }
.dim { color: #555; }
.start { margin-left: 392.5px; }
.search {
  width: 274px;
  height: 38px;
  margin-left: 16px;
  padding: 0 5px 0 13px;
  display: flex;
  align-items: center;
  background: #f3f3f3;
  border: 1px solid #c4c4c4;
  border-radius: 19px;
}
.search span { margin: 1px 0 0 12px; flex: 1; font-size: 17px; letter-spacing: -0.5px; color: #555; }
.apps { display: flex; gap: 7px; margin-left: 8px; }
.app { width: 48px; height: 48px; display: flex; justify-content: center; align-items: center; position: relative; border-radius: 5px; }
.active { background: #efefef; }
.app b { position: absolute; left: 20px; bottom: 0; width: 8px; height: 4px; border-radius: 2px; background: #7f7f7f; }
.app b.long { left: 14px; width: 20px; background: #4a4a4a; }
.chrome { margin: -6px -6px 0 0; }
.teams-t { font: 700 11px "Open Sans", sans-serif; fill: #fff; text-anchor: middle; }
.wpm-t { font: 800 8.5px Inter, sans-serif; fill: #fff; text-anchor: middle; letter-spacing: 0; }
.tray { margin-left: auto; display: flex; align-items: center; }
.t-cloud { margin-left: 23px; }
.lang { width: 40px; margin-left: 18px; text-align: center; letter-spacing: 0.1px; }
.t-wifi { margin-left: 17px; }
.t-vol { margin-left: 10px; }
.t-bat { margin: -3px 0 0 10px; }
.clock { width: 98px; text-align: right; letter-spacing: 0.03px; }
```
